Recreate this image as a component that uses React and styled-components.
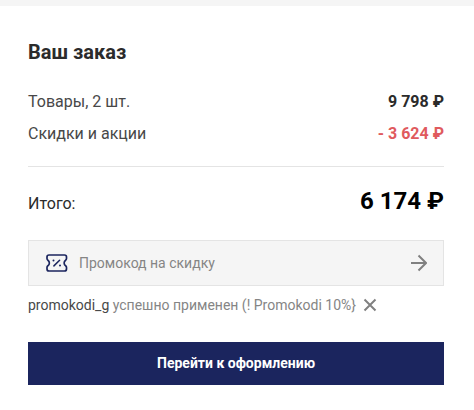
import React, { useState } from 'react'
import styled, { createGlobalStyle } from 'styled-components'

const color = {
  text: '#2b2b2b',
  label: '#484848',
  muted: '#858585',
  line: '#e4e4e4',
  panel: '#f5f5f5',
  sale: '#e05a5e',
  brand: '#1b255e',
}

const GlobalStyle = createGlobalStyle`
  * {
    box-sizing: border-box;
  }
  body {
    margin: 0;
    background: #fff;
    color: ${color.text};
    font-family: Roboto, "Liberation Sans", sans-serif;
    font-size: 16px;
    line-height: 24px;
  }
  button,
  input {
    font: inherit;
  }
`

const Page = styled.div`
  border-top: 6px solid ${color.panel};
`

const Order = styled.main`
  display: flex;
  flex-direction: column;
  padding: 34px 30px 24px 28px;
`

const Title = styled.h1`
  margin: 0 0 26px;
  font-size: 20px;
  font-weight: 700;
  line-height: 24px;
`

const Summary = styled.dl`
  display: flex;
  flex-direction: column;
  gap: 8px;
  margin: 0;
  padding-bottom: 20px;
  border-bottom: 1px solid ${color.line};
`

const Row = styled.div`
  display: flex;
  justify-content: space-between;
`

const Label = styled.dt`
  color: ${color.label};
`

const Price = styled.dd`
  margin: 0;
  font-weight: 700;
  color: ${props => props.$sale ? color.sale : color.text};
`

const Total = styled.div`
  display: flex;
  align-items: baseline;
  justify-content: space-between;
  margin: 18px 0 20px;
  line-height: 32px;
`

const TotalPrice = styled.strong`
  color: #000;
  font-size: 24px;
  font-weight: 700;
`

const PromoForm = styled.form`
  display: flex;
  align-items: center;
  height: 46px;
  padding: 0 16px;
  border: 1px solid ${color.line};
  background: ${color.panel};
`

const PromoLabel = styled.label`
  display: flex;
  color: ${color.brand};
`

const PromoInput = styled.input`
  flex: 1;
  min-width: 0;
  padding: 0 10px;
  border: 0;
  outline: 0;
  background: none;
  color: ${color.text};
  font-size: 14px;
  &::placeholder {
    color: ${color.muted};
    opacity: 1;
  }
`

const IconButton = styled.button`
  display: flex;
  padding: 0;
  border: 0;
  background: none;
  color: #808080;
  cursor: pointer;
`

const Applied = styled.div`
  display: flex;
  align-items: center;
  gap: 7px;
  margin-top: 9px;
  font-size: 14px;
  line-height: 20px;
`

const AppliedText = styled.p`
  margin: 0;
  color: ${color.muted};
`

const Code = styled.span`
  color: ${color.label};
`

const Checkout = styled.button`
  height: 43px;
  margin-top: 27px;
  padding: 0 16px 2px;
  border: 0;
  background: ${color.brand};
  color: #fff;
  font-size: 14px;
  font-weight: 700;
  cursor: pointer;
`

const TicketIcon = () => (
  <svg width="24" height="20" viewBox="0 0 24 20" fill="none" stroke="currentColor" strokeWidth="1.7" strokeLinecap="round" strokeLinejoin="round" aria-hidden="true">
    <path d="M4 2h15.500a2 2 0 0 1 2 2v1.600c0 .8-.3 1.200-.9 1.600a3.400 3.400 0 0 0 0 5.600c.6.4.9.8.9 1.600V16a2 2 0 0 1-2 2H4a2 2 0 0 1-2-2v-1.600c0-.8.3-1.200.9-1.600a3.400 3.400 0 0 0 0-5.600C2.300 6.800 2 6.400 2 5.600V4a2 2 0 0 1 2-2z"/>
    <path d="M8.900 12.900l5.700-5.700" strokeWidth="1.500"/>
    <circle cx="8.500" cy="7.500" r="1" fill="currentColor" stroke="none"/>
    <circle cx="15" cy="12.500" r="1" fill="currentColor" stroke="none"/>
  </svg>
)

const ArrowIcon = () => (
  <svg width="16" height="18" viewBox="0 0 16 18" fill="none" stroke="currentColor" strokeWidth="2" aria-hidden="true">
    <path d="M0 9h15M7.500 1.500L15 9l-7.500 7.500"/>
  </svg>
)

const CloseIcon = () => (
  <svg width="14" height="14" viewBox="0 0 14 14" fill="none" stroke="currentColor" strokeWidth="2" aria-hidden="true">
    <path d="M1.500 1.500l11 11M12.500 1.500l-11 11"/>
  </svg>
)

const App = () => {
  const [code, setCode] = useState('')
  const [applied, setApplied] = useState('promokodi_g')

  const handleSubmit = (e) => {
    e.preventDefault()
    if (code) {
      setApplied(code)
      setCode('')
    }
  }

  return (
    <Page>
      <GlobalStyle/>
      <Order>
        <Title>Ваш заказ</Title>
        <Summary>
          <Row>
            <Label>Товары, 2 шт.</Label>
            <Price>9 798 ₽</Price>
          </Row>
          <Row>
            <Label>Скидки и акции</Label>
            <Price $sale>- 3 624 ₽</Price>
          </Row>
        </Summary>
        <Total>
          <span>Итого:</span>
          <TotalPrice>6 174 ₽</TotalPrice>
        </Total>
        <PromoForm onSubmit={handleSubmit}>
          <PromoLabel htmlFor="promo" aria-label="Промокод на скидку">
            <TicketIcon/>
          </PromoLabel>
          <PromoInput
            id="promo"
            placeholder="Промокод на скидку"
            value={code}
            onChange={e => setCode(e.target.value)}
          />
          <IconButton type="submit" aria-label="Применить">
            <ArrowIcon/>
          </IconButton>
        </PromoForm>
        { applied && (
          <Applied>
            <AppliedText>
              <Code>{applied}</Code> успешно применен (! Promokodi 10%{'}'}
            </AppliedText>
            <IconButton type="button" aria-label="Удалить промокод" onClick={() => setApplied('')}>
              <CloseIcon/>
            </IconButton>
          </Applied>
        ) }
        <Checkout type="button">Перейти к оформлению</Checkout>
      </Order>
    </Page>
  )
}

export default App
